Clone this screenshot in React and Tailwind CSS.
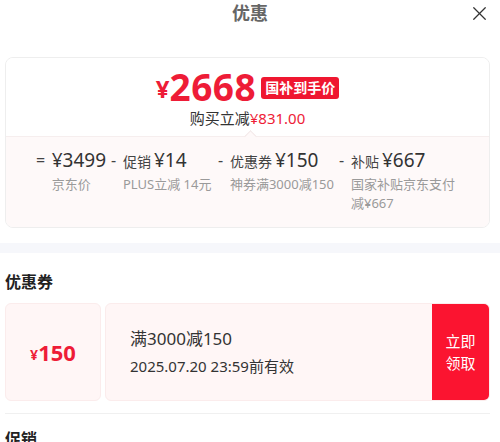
import { X } from 'lucide-react';

const font = { fontFamily: '"Noto Sans", "Noto Sans CJK SC", sans-serif' };

const parts = [
  { op: '=', label: '', amount: '¥3499', sub: ['京东价'], w: 'w-[70px]' },
  { op: '-', label: '促销', amount: '¥14', sub: ['PLUS立减 14元'], w: 'w-[102px]' },
  { op: '-', label: '优惠券', amount: '¥150', sub: ['神券满3000减150'], w: 'w-[116px]' },
  { op: '-', label: '补贴', amount: '¥667', sub: ['国家补贴京东支付', '减¥667'], w: 'w-[116px]' },
];

const PriceCard = () => (
  <div className="mx-[5px] w-[485px] rounded-lg border border-[#eeeeee] overflow-hidden">
    <div className="flex flex-col items-center pt-[10px] pb-[8px] bg-white">
      <div className="flex items-center h-[38px]">
        <span className="text-[#ee1c37] font-bold text-[24px] leading-[24px] mt-[4px]">¥</span>
        <span className="text-[#ee1c37] font-bold text-[37px] leading-[38px] tracking-[0.5px]">2668</span>
        <span className="ml-[5px] bg-[#ef1730] text-white font-bold text-[14px] leading-none px-[4px] py-[4px] rounded-[3px] mt-[2px]">国补到手价</span>
      </div>
      <div className="mt-[2px] text-[15px] leading-[20px] text-[#333]">
        购买立减<span className="text-[#ee1c37]">¥831.00</span>
      </div>
    </div>
    <div className="relative bg-[#fef9f9] border-t border-[#f6eeee] h-[91px]">
      <div className="absolute -top-[5px] left-[240px] w-[9px] h-[9px] rotate-45 bg-[#fef9f9] border-l border-t border-[#f2e8e8]" />
      <div className="flex pl-[30px] pt-[11px] gap-[5px]">
        {parts.map((p) => (
          <div key={p.amount} className={`flex ${p.w}`}>
            <span className={`text-[#444] text-[16px] leading-[24px] ${p.op === '=' ? 'w-[17px]' : 'w-[12px]'}`}>{p.op}</span>
            <div className="flex flex-col">
              <div className="flex items-baseline whitespace-nowrap">
                {p.label && <span className="text-[#444] text-[14px] mr-[3px]">{p.label}</span>}
                <span className="text-[#333] text-[19px] leading-[24px]">{p.amount}</span>
              </div>
              <div className="mt-[3px] text-[13px] leading-[19px] text-[#9a9a9a]">
                {p.sub.map((s) => (
                  <div key={s} className="whitespace-nowrap">{s}</div>
                ))}
              </div>
            </div>
          </div>
        ))}
      </div>
    </div>
  </div>
);

const Coupon = () => (
  <div className="mx-[5px] w-[485px] flex gap-[4px] h-[98px]">
    <div className="w-[96px] rounded-md border border-[#fbecec] bg-[#fff6f6] flex items-center justify-center">
      <span className="text-[#ee1c37] text-[14px] font-bold mt-[4px]">¥</span>
      <span className="text-[#ee1c37] text-[22px] font-bold">150</span>
    </div>
    <div className="flex-1 flex rounded-md border border-[#fbecec] bg-[#fff6f6] overflow-hidden">
      <div className="flex-1 flex flex-col justify-center pl-[24px] text-[#333]">
        <div className="text-[17px] leading-[24px]">满3000减150</div>
        <div className="text-[15px] leading-[22px] mt-[4px]">2025.07.20 23:59前有效</div>
      </div>
      <div className="w-[57px] bg-[#fb1430] flex items-center justify-center text-white text-[15px] leading-[22px] text-center">
        立即<br />领取
      </div>
    </div>
  </div>
);

export default function App() {
  return (
    <div className="w-[500px] h-[442px] overflow-hidden bg-white" style={font}>
      <div className="relative h-[28px] flex items-center justify-center">
        <span className="text-[18px] font-bold text-[#666] mt-[-2px]">优惠</span>
        <X className="absolute right-[9px] top-[2px] w-[23px] h-[23px] text-[#333]" strokeWidth={1.3} />
      </div>
      <div className="h-[29px]" />
      <PriceCard />
      <div className="h-[15px]" />
      <div className="h-[10px] bg-[#f6f7fb]" />
      <div className="pl-[5px] pt-[18px] pb-[10px] text-[16px] font-bold text-[#222] leading-[22px]">优惠券</div>
      <Coupon />
      <div className="mx-[5px] w-[485px] mt-[12px] border-t border-[#f0f0f0]" />
      <div className="pl-[5px] pt-[14px] text-[16px] font-bold text-[#222] leading-[22px]">促销</div>
    </div>
  );
}
